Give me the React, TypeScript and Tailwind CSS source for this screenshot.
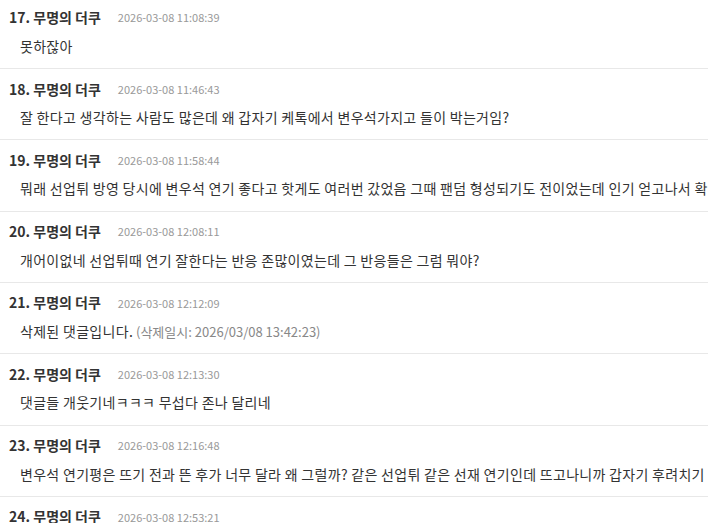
import React from "react";

type Comment = {
  no: number;
  date: string;
  body: string;
  deletedAt?: string;
};

const comments: Comment[] = [
  { no: 17, date: "2026-03-08 11:08:39", body: "못하잖아" },
  { no: 18, date: "2026-03-08 11:46:43", body: "잘 한다고 생각하는 사람도 많은데 왜 갑자기 케톡에서 변우석가지고 들이 박는거임?" },
  { no: 19, date: "2026-03-08 11:58:44", body: "뭐래 선업튀 방영 당시에 변우석 연기 좋다고 핫게도 여러번 갔었음 그때 팬덤 형성되기도 전이었는데 인기 얻고나서 확" },
  { no: 20, date: "2026-03-08 12:08:11", body: "개어이없네 선업튀때 연기 잘한다는 반응 존많이였는데 그 반응들은 그럼 뭐야?" },
  { no: 21, date: "2026-03-08 12:12:09", body: "삭제된 댓글입니다.", deletedAt: "2026/03/08 13:42:23" },
  { no: 22, date: "2026-03-08 12:13:30", body: "댓글들 개웃기네ㅋㅋㅋ 무섭다 존나 달리네" },
  { no: 23, date: "2026-03-08 12:16:48", body: "변우석 연기평은 뜨기 전과 뜬 후가 너무 달라 왜 그럴까? 같은 선업튀 같은 선재 연기인데 뜨고나니까 갑자기 후려치기" },
  { no: 24, date: "2026-03-08 12:53:21", body: "" },
];

function CommentItem({ c }: { c: Comment }) {
  return (
    <li className="border-b border-[#e8e8e8] pt-[11px] pb-[12.33px] pl-[9px]">
      <div className="flex items-center h-[18px] whitespace-nowrap">
        <span className="text-[14px] font-bold text-[#333]">
          {c.no}. 무명의 더쿠
        </span>
        <span className="ml-[17px] text-[11px] text-[#999]">{c.date}</span>
      </div>
      <div className="mt-[9px] pl-[11px] h-[20px] leading-[20px] text-[14px] tracking-[0.3px] text-[#333] whitespace-nowrap">
        {c.body}
        {c.deletedAt && (
          <span className="text-[13px] tracking-normal text-[#888]"> (삭제일시: {c.deletedAt})</span>
        )}
      </div>
    </li>
  );
}

export default function App() {
  return (
    <div
      className="w-[708px] h-[523px] overflow-hidden bg-white"
      style={{ fontFamily: '"Noto Sans CJK KR", "Noto Sans", sans-serif' }}
    >
      <ul className="-mt-[2.33px]">
        {comments.map((c) => (
          <CommentItem key={c.no} c={c} />
        ))}
      </ul>
    </div>
  );
}
